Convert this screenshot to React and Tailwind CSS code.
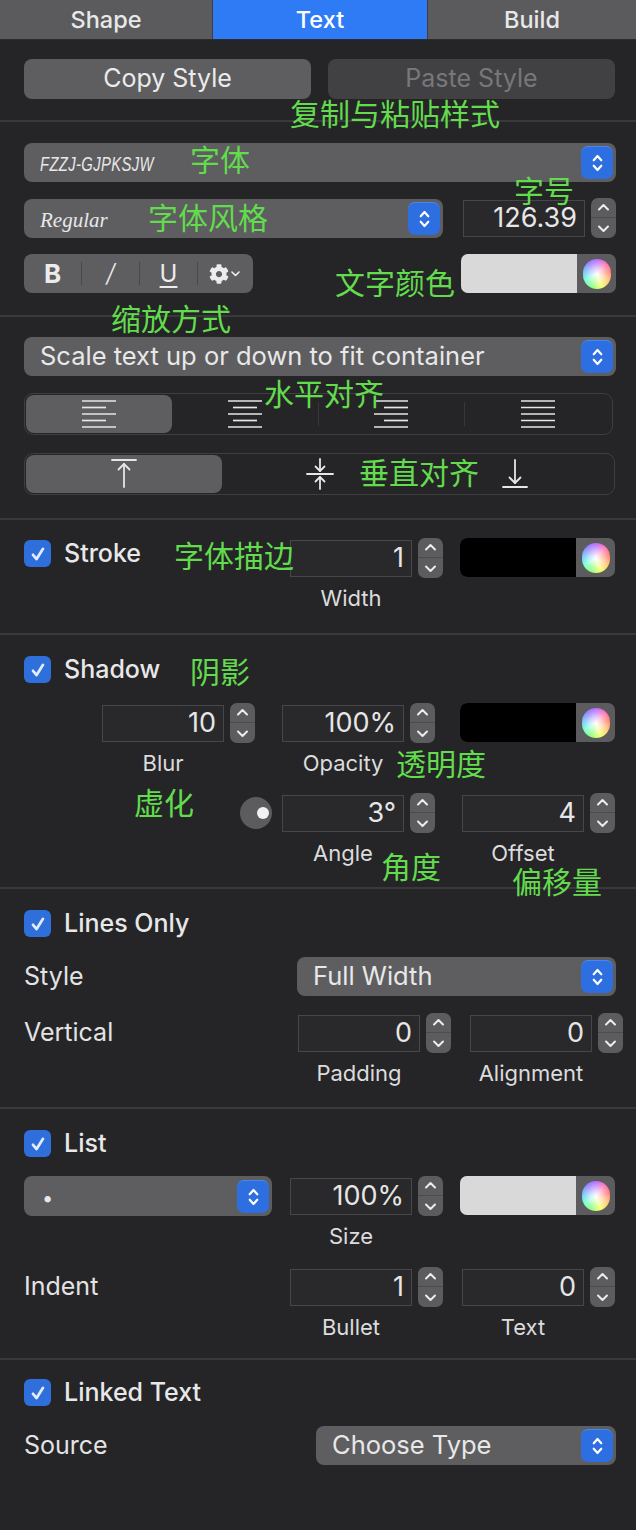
import React from "react";
import { FaCog } from "react-icons/fa";

const Chev = ({ w = 12, h = 20, color = "#ffffff", sw = 2 }) => (
  <svg width={w} height={h} viewBox="0 0 12 20" fill="none" stroke={color} strokeWidth={sw} strokeLinecap="round" strokeLinejoin="round">
    <path d="M2.5 7.5 L6 3.5 L9.5 7.5" />
    <path d="M2.5 12.5 L6 16.5 L9.5 12.5" />
  </svg>
);

function BlueBtn() {
  return (
    <div className="w-[32px] h-[33px] rounded-[7px] bg-[#2d6fe0] border-t border-[#4a86ee] flex items-center justify-center shrink-0">
      <Chev w={13} h={22} />
    </div>
  );
}

function Popup({ className = "", children }) {
  return (
    <div className={`h-[39px] rounded-[8px] bg-[#5e5e60] flex items-center pl-[16px] pr-[3px] shrink-0 ${className}`}>
      <div className="flex-1 min-w-0 text-[25.5px] text-[#e8e8e8] whitespace-nowrap overflow-hidden">{children}</div>
      <BlueBtn />
    </div>
  );
}

function Stepper() {
  return (
    <div className="w-[25px] h-[40px] rounded-[7px] bg-[#5c5c5e] flex flex-col items-center justify-between py-[4px] relative shrink-0">
      <svg width="13" height="10" viewBox="0 0 13 10" fill="none" stroke="#ececec" strokeWidth="2" strokeLinecap="round" strokeLinejoin="round">
        <path d="M2 7.5 L6.5 3 L11 7.5" />
      </svg>
      <div className="absolute left-0 right-0 top-[19px] h-px bg-[#4c4c4e]" />
      <svg width="13" height="10" viewBox="0 0 13 10" fill="none" stroke="#ececec" strokeWidth="2" strokeLinecap="round" strokeLinejoin="round">
        <path d="M2 2.5 L6.5 7 L11 2.5" />
      </svg>
    </div>
  );
}

function NumField({ value }) {
  return (
    <div className="w-[122px] h-[37px] shrink-0 bg-[#29292b] border border-[#47474a] flex items-center justify-end pr-[7px] text-[27px] text-[#e6e6e6]">
      {value}
    </div>
  );
}

function NumGroup({ value, label }) {
  return (
    <div className="flex flex-col w-[153px] shrink-0">
      <div className="flex items-center gap-[6px] h-[40px]">
        <NumField value={value} />
        <Stepper />
      </div>
      {label && (
        <div className="w-[122px] text-center mt-[8px] leading-[24px] text-[22px] text-[#dcdcdc] whitespace-nowrap">{label}</div>
      )}
    </div>
  );
}

function ColorWell({ swatch }) {
  return (
    <div className="w-[155px] h-[39px] rounded-[7px] bg-[#5c5c5e] flex items-center pr-[5px] shrink-0">
      <div className={`w-[116px] h-full rounded-l-[7px] ${swatch}`} />
      <div className="ml-auto w-[28px] h-[30px] rounded-full bg-[image:radial-gradient(circle,rgba(255,255,255,1)_0%,rgba(255,255,255,0.6)_30%,rgba(255,255,255,0)_72%),conic-gradient(from_0deg,#b56cff,#ff6fb5,#ff7a6b,#ffc56b,#f3ff6b,#8dff7a,#6bffd2,#6bbcff,#8b7bff,#b56cff)]" />
    </div>
  );
}

function Check() {
  return (
    <div className="w-[27px] h-[27px] rounded-[6px] bg-[#2f6fdc] flex items-center justify-center shrink-0">
      <svg width="18" height="18" viewBox="0 0 18 18" fill="none">
        <path d="M4 9.8 L7.6 14 L14 3.8" stroke="#e3ecff" strokeWidth="2.7" strokeLinecap="round" strokeLinejoin="round" />
      </svg>
    </div>
  );
}

function Title({ children }) {
  return (
    <div className="flex items-center gap-[13px] h-[27px]">
      <Check />
      <span className="text-[25px] font-medium text-[#e8e8e8] leading-none whitespace-nowrap">{children}</span>
    </div>
  );
}

function Divider() {
  return <div className="h-[2px] bg-[#39393b]" />;
}

function AlignIcon({ type }) {
  const ys = [1, 7.5, 14, 20.5, 27];
  return (
    <svg width="34" height="28" viewBox="0 0 34 28" fill="none" stroke="#e6e6e6" strokeWidth="1.7">
      {ys.map((y, i) => {
        const w = type === "justify" ? 34 : i % 2 === 0 ? 34 : 24;
        const x1 = type === "left" || type === "justify" ? 0 : type === "center" ? (34 - w) / 2 : 34 - w;
        return <line key={i} x1={x1} y1={y} x2={x1 + w} y2={y} />;
      })}
    </svg>
  );
}

function VIcon({ type }) {
  return (
    <svg width="28" height="32" viewBox="0 0 28 32" fill="none" stroke="#e6e6e6" strokeWidth="1.8" strokeLinecap="round" strokeLinejoin="round">
      {type === "top" && (
        <>
          <line x1="2" y1="2" x2="26" y2="2" />
          <line x1="14" y1="6" x2="14" y2="29" />
          <path d="M8.5 11.5 L14 6 L19.5 11.5" />
        </>
      )}
      {type === "middle" && (
        <>
          <line x1="1" y1="16" x2="27" y2="16" />
          <line x1="14" y1="1" x2="14" y2="13" />
          <path d="M9.5 8.5 L14 13 L18.5 8.5" />
          <line x1="14" y1="31" x2="14" y2="19" />
          <path d="M9.5 23.5 L14 19 L18.5 23.5" />
        </>
      )}
      {type === "bottom" && (
        <>
          <line x1="14" y1="2" x2="14" y2="25" />
          <path d="M8.5 19.5 L14 25 L19.5 19.5" />
          <line x1="2" y1="29" x2="26" y2="29" />
        </>
      )}
    </svg>
  );
}

const notes = [
  ["复制与粘贴样式", 290, 97],
  ["字体", 190, 143],
  ["字号", 514, 174],
  ["字体风格", 148, 201],
  ["文字颜色", 335, 266],
  ["缩放方式", 111, 302],
  ["水平对齐", 264, 377],
  ["垂直对齐", 359, 456],
  ["字体描边", 174, 539],
  ["阴影", 190, 655],
  ["透明度", 396, 747],
  ["虚化", 134, 786],
  ["角度", 381, 850],
  ["偏移量", 512, 865],
];

const rowLabel = "text-[25px] text-[#e3e3e3] whitespace-nowrap";

export default function App() {
  return (
    <div className="relative w-[636px] h-[1530px] overflow-hidden bg-[#252528] font-['Inter',sans-serif] text-[#e3e3e3]">
      {/* Tabs */}
      <div className="flex h-[40px] bg-[#5b5b5d] border-b border-[#2c2c2e]">
        <div className="w-[213px] flex items-center justify-center text-[23.5px] font-medium text-[#e8e8e8] border-r border-[#3f3f41]">Shape</div>
        <div className="w-[214px] flex items-center justify-center text-[23.5px] font-medium text-white bg-[#2f7bf5]">Text</div>
        <div className="flex-1 flex items-center justify-center text-[23.5px] font-medium text-[#e8e8e8] border-l border-[#3f3f41]">Build</div>
      </div>

      {/* Copy / Paste */}
      <div className="h-[80px] pt-[19px] pl-[24px] pr-[20px] flex gap-[17px]">
        <div className="w-[287px] h-[40px] rounded-[8px] bg-[#5e5e60] flex items-center justify-center text-[25px] text-[#ebebeb]">Copy Style</div>
        <div className="w-[287px] h-[40px] rounded-[8px] bg-[#414143] flex items-center justify-center text-[25px] text-[#77777a]">Paste Style</div>
      </div>
      <Divider />

      {/* Font */}
      <div className="h-[193px] pt-[21px] pl-[24px] pr-[20px]">
        <Popup className="w-[592px]">
          <span className="inline-block italic font-['Liberation_Sans',sans-serif] text-[20px] tracking-[0.5px] origin-left scale-x-[0.74]">FZZJ-GJPKSJW</span>
        </Popup>
        <div className="mt-[16px] flex items-center h-[40px]">
          <Popup className="w-[419px]">
            <span className="italic font-['Liberation_Serif',serif] text-[21px]">Regular</span>
          </Popup>
          <div className="ml-[20px]">
            <NumGroup value="126.39" />
          </div>
        </div>
        <div className="mt-[16px] flex items-center h-[39px]">
          <div className="w-[229px] h-[39px] rounded-[8px] bg-[#5e5e60] flex items-center">
            <div className="w-[57px] flex items-center justify-center text-[26px] font-bold text-[#ececec]">B</div>
            <div className="w-px h-[23px] bg-[#48484a]" />
            <div className="w-[57px] flex items-center justify-center text-[25px] italic font-light text-[#ececec]">/</div>
            <div className="w-px h-[23px] bg-[#48484a]" />
            <div className="w-[57px] flex items-center justify-center text-[24px] text-[#ececec]">
              <span className="underline underline-offset-[4px] decoration-[1.5px]">U</span>
            </div>
            <div className="w-px h-[23px] bg-[#48484a]" />
            <div className="flex-1 flex items-center justify-center gap-[2px] text-[#ececec] pr-[2px]">
              <FaCog size={20} />
              <svg width="9" height="6" viewBox="0 0 9 6" fill="none" stroke="#ececec" strokeWidth="1.6" strokeLinecap="round" strokeLinejoin="round">
                <path d="M1 1 L4.5 4.5 L8 1" />
              </svg>
            </div>
          </div>
          <div className="ml-auto">
            <ColorWell swatch="bg-[#d9d9d9]" />
          </div>
        </div>
      </div>
      <Divider />

      {/* Scale / alignment */}
      <div className="h-[201px] pt-[20px] pl-[24px] pr-[20px]">
        <Popup className="w-[592px]">Scale text up or down to fit container</Popup>
        <div className="mt-[17px] w-[589px] h-[42px] rounded-[9px] border border-[#3e3e40] flex items-center p-[1px]">
          <div className="flex-1 h-full rounded-[8px] bg-[#5e5e60] flex items-center justify-center"><AlignIcon type="left" /></div>
          <div className="flex-1 h-full flex items-center justify-center"><AlignIcon type="center" /></div>
          <div className="w-px h-[24px] bg-[#38383a]" />
          <div className="flex-1 h-full flex items-center justify-center"><AlignIcon type="right" /></div>
          <div className="w-px h-[24px] bg-[#38383a]" />
          <div className="flex-1 h-full flex items-center justify-center"><AlignIcon type="justify" /></div>
        </div>
        <div className="mt-[18px] w-[591px] h-[42px] rounded-[9px] border border-[#3e3e40] flex items-center p-[1px]">
          <div className="flex-1 h-full rounded-[8px] bg-[#5e5e60] flex items-center justify-center"><VIcon type="top" /></div>
          <div className="flex-1 h-full flex items-center justify-center"><VIcon type="middle" /></div>
          <div className="flex-1 h-full flex items-center justify-center"><VIcon type="bottom" /></div>
        </div>
      </div>
      <Divider />

      {/* Stroke */}
      <div className="h-[113px] pt-[18px] pl-[24px] pr-[20px]">
        <div className="flex items-start">
          <div className="w-[266px] shrink-0 pt-[2px]">
            <Title>Stroke</Title>
          </div>
          <NumGroup value="1" label="Width" />
          <div className="ml-[17px]">
            <ColorWell swatch="bg-black" />
          </div>
        </div>
      </div>
      <Divider />

      {/* Shadow */}
      <div className="h-[252px] pt-[21px] pl-[24px] pr-[20px]">
        <Title>Shadow</Title>
        <div className="mt-[20px] flex items-start pl-[78px]">
          <NumGroup value="10" label="Blur" />
          <div className="ml-[27px]">
            <NumGroup value="100%" label="Opacity" />
          </div>
          <div className="ml-[25px]">
            <ColorWell swatch="bg-black" />
          </div>
        </div>
        <div className="mt-[18px] flex items-start pl-[216px]">
          <div className="w-[32px] h-[40px] flex items-center shrink-0">
            <div className="w-[32px] h-[32px] rounded-full bg-[#5c5c5e] flex items-center justify-end pr-[3px]">
              <div className="w-[12px] h-[12px] rounded-full bg-[#f2f2f2]" />
            </div>
          </div>
          <div className="ml-[10px]">
            <NumGroup value="3°" label="Angle" />
          </div>
          <div className="ml-[27px]">
            <NumGroup value="4" label="Offset" />
          </div>
        </div>
      </div>
      <Divider />

      {/* Lines only */}
      <div className="h-[218px] pt-[21px] pl-[24px] pr-[20px]">
        <Title>Lines Only</Title>
        <div className="mt-[20px] flex items-center">
          <span className={rowLabel}>Style</span>
          <Popup className="ml-auto w-[319px]">Full Width</Popup>
        </div>
        <div className="mt-[17px] flex items-start">
          <div className={`w-[274px] shrink-0 h-[40px] flex items-center ${rowLabel}`}>Vertical</div>
          <NumGroup value="0" label="Padding" />
          <div className="ml-[19px]">
            <NumGroup value="0" label="Alignment" />
          </div>
        </div>
      </div>
      <Divider />

      {/* List */}
      <div className="h-[249px] pt-[21px] pl-[24px] pr-[20px]">
        <Title>List</Title>
        <div className="mt-[19px] flex items-start">
          <Popup className="w-[248px] h-[40px]">
            <span className="pl-[2px] text-[20px]">•</span>
          </Popup>
          <div className="ml-[18px]">
            <NumGroup value="100%" label="Size" />
          </div>
          <div className="ml-[17px]">
            <ColorWell swatch="bg-[#d9d9d9]" />
          </div>
        </div>
        <div className="mt-[19px] flex items-start">
          <div className={`w-[266px] shrink-0 h-[40px] flex items-center ${rowLabel}`}>Indent</div>
          <NumGroup value="1" label="Bullet" />
          <div className="ml-[19px]">
            <NumGroup value="0" label="Text" />
          </div>
        </div>
      </div>
      <Divider />

      {/* Linked text */}
      <div className="pt-[19px] pl-[24px] pr-[20px]">
        <Title>Linked Text</Title>
        <div className="mt-[20px] flex items-center">
          <span className={rowLabel}>Source</span>
          <Popup className="ml-auto w-[300px]">Choose Type</Popup>
        </div>
      </div>

      {/* Annotations */}
      {notes.map(([t, x, y]) => (
        <div
          key={t}
          className="absolute whitespace-nowrap text-[30px] leading-none text-[#62dc4c] font-['Noto_Sans_CJK_SC',sans-serif]"
          style={{ left: x, top: y }}
        >
          {t}
        </div>
      ))}
    </div>
  );
}
